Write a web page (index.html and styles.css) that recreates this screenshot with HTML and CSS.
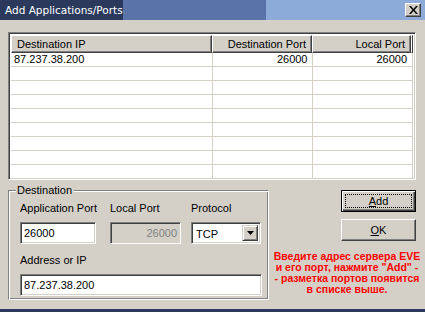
FILE: index.html
```html
<!DOCTYPE html>
<html>
<head>
<meta charset="utf-8">
<link rel="stylesheet" href="styles.css">
</head>
<body>
<div class="window">
  <div class="titlebar">
    <span class="title">Add Applications/Ports</span>
    <div class="close">
      <svg width="9" height="8" viewBox="0 0 9 8"><path d="M0 0h2l2.5 3 2.5-3h2L5.5 4 9 8H7L4.5 5 2 8H0l3.5-4z" fill="#000"/></svg>
    </div>
  </div>
  <div class="client">
    <div class="list">
      <div class="list-head">
        <div class="th c1">Destination IP</div>
        <div class="th c2 r">Destination Port</div>
        <div class="th c3 r">Local Port</div>
        <div class="th fill"></div>
      </div>
      <div class="row"><div class="td c1">87.237.38.200</div><div class="td c2 r">26000</div><div class="td c3 r">26000</div></div>
      <div class="row"><div class="td c1"></div><div class="td c2"></div><div class="td c3"></div></div>
      <div class="row"><div class="td c1"></div><div class="td c2"></div><div class="td c3"></div></div>
      <div class="row"><div class="td c1"></div><div class="td c2"></div><div class="td c3"></div></div>
      <div class="row"><div class="td c1"></div><div class="td c2"></div><div class="td c3"></div></div>
      <div class="row"><div class="td c1"></div><div class="td c2"></div><div class="td c3"></div></div>
      <div class="row"><div class="td c1"></div><div class="td c2"></div><div class="td c3"></div></div>
      <div class="row"><div class="td c1"></div><div class="td c2"></div><div class="td c3"></div></div>
      <div class="row"><div class="td c1"></div><div class="td c2"></div><div class="td c3"></div></div>
    </div>
    <div class="bottom">
      <div class="group">
        <span class="legend">Destination</span>
        <div class="fields">
          <div class="field f-app">
            <span class="label">Application Port</span>
            <div class="edit">26000</div>
          </div>
          <div class="field f-local">
            <span class="label">Local Port</span>
            <div class="edit disabled">26000</div>
          </div>
          <div class="field f-proto">
            <span class="label">Protocol</span>
            <div class="combo">
              <span class="combo-text">TCP</span>
              <span class="combo-btn">
                <svg width="7" height="4" viewBox="0 0 7 4"><path d="M0 0h7L3.5 4z" fill="#000"/></svg>
              </span>
            </div>
          </div>
        </div>
        <div class="field f-addr">
          <span class="label">Address or IP</span>
          <div class="edit">87.237.38.200</div>
        </div>
      </div>
      <div class="side">
        <div class="buttons">
          <div class="btn default"><span class="focus"><u>A</u>dd</span></div>
          <div class="btn"><u>O</u>K</div>
        </div>
        <p class="note">Введите адрес сервера EVE<br>и его порт, нажмите "Add" -<br>- разметка портов появится<br>в списке выше.</p>
      </div>
    </div>
  </div>
</div>
</body>
</html>
```

FILE: styles.css
```css
* { box-sizing: border-box; }
html, body { margin: 0; padding: 0; }
body {
  width: 425px;
  height: 312px;
  overflow: hidden;
  background: #d4d0c8;
  font-family: "Liberation Sans", Arial, sans-serif;
  font-size: 11px;
  color: #000;
}
.window {
  width: 425px;
  height: 312px;
  display: flex;
  flex-direction: column;
  background: #d4d0c8;
  border-bottom: 3px solid #2b3a5c;
}
.titlebar {
  height: 20px;
  display: flex;
  align-items: center;
  background: linear-gradient(to right, #2b3a5c 0, #2b3a5c 123px, #5a73a8 123px, #5a73a8 266px, #8cabd8 266px);
  padding: 0 5px 0 5px;
}
.title {
  color: #fff;
  font-family: "DejaVu Sans", Verdana, sans-serif;
  font-size: 10.5px;
  font-weight: normal;
  flex: 1;
}
.close {
  width: 16px;
  height: 14px;
  background: #d4d0c8;
  border: 1px solid;
  border-color: #fff #404040 #404040 #fff;
  box-shadow: inset -1px -1px 0 #808080;
  display: flex;
  align-items: center;
  justify-content: center;
  margin-right: -1px;
}
.client {
  flex: 1;
  padding: 12px 9px 0 8px;
  display: flex;
  flex-direction: column;
}
.list {
  height: 148px;
  background: #fff;
  border: 1px solid;
  border-color: #808080 #fff #fff #808080;
  box-shadow: inset 1px 1px 0 #404040, inset -1px -1px 0 #d4d0c8;
  padding: 2px;
  overflow: hidden;
}
.list-head {
  display: flex;
  height: 18px;
}
.th {
  background: #d4d0c8;
  border: 1px solid;
  border-color: #fff #404040 #404040 #fff;
  box-shadow: inset -1px -1px 0 #808080;
  padding: 2px 5px 0 5px;
  line-height: 13px;
  white-space: nowrap;
}
.c1 { width: 203px; }
.c2 { width: 101px; }
.c3 { width: 100px; }
.th.fill { flex: 1; padding: 0; }
.r { text-align: right; }
.row {
  display: flex;
  height: 14px;
  border-bottom: 1px solid #d4d0c8;
}
.td {
  border-right: 1px solid #d4d0c8;
  padding: 0 5px 0 3px;
  line-height: 13px;
  white-space: nowrap;
}
.bottom {
  display: flex;
  margin-top: 10px;
}
.group {
  position: relative;
  width: 261px;
  height: 110px;
  flex: none;
  border: 1px solid;
  border-color: #808080 #fff #fff #808080;
  box-shadow: inset 1px 1px 0 #fff, inset -1px -1px 0 #808080;
  padding: 11px 0 0 11px;
}
.legend {
  position: absolute;
  left: 7px;
  top: -7px;
  background: #d4d0c8;
  padding: 0 2px 0 1px;
  line-height: 13px;
}
.fields {
  display: flex;
}
.field {
  display: flex;
  flex-direction: column;
}
.label {
  line-height: 13px;
  height: 13px;
  margin-bottom: 7px;
}
.f-app { width: 90px; }
.f-app .edit { width: 76px; }
.f-local { width: 81px; }
.f-local .edit { width: 71px; }
.f-addr { margin-top: 10px; }
.f-addr .edit { width: 242px; }
.edit {
  height: 22px;
  background: #fff;
  border: 1px solid;
  border-color: #808080 #fff #fff #808080;
  box-shadow: inset 1px 1px 0 #404040, inset -1px -1px 0 #d4d0c8;
  padding: 3px 3px 0 3px;
  line-height: 14px;
}
.edit.disabled {
  background: #d4d0c8;
  color: #808080;
  text-align: right;
}
.combo {
  width: 70px;
  height: 22px;
  background: #fff;
  border: 1px solid;
  border-color: #808080 #fff #fff #808080;
  box-shadow: inset 1px 1px 0 #404040, inset -1px -1px 0 #d4d0c8;
  padding: 2px;
  display: flex;
}
.combo-text {
  flex: 1;
  padding: 2px 0 0 2px;
  line-height: 14px;
}
.combo-btn {
  width: 16px;
  height: 16px;
  background: #d4d0c8;
  border: 1px solid;
  border-color: #d4d0c8 #404040 #404040 #d4d0c8;
  box-shadow: inset 1px 1px 0 #fff, inset -1px -1px 0 #808080;
  display: flex;
  align-items: center;
  justify-content: center;
}
.side {
  flex: 1;
  min-width: 0;
  display: flex;
  flex-direction: column;
  align-items: stretch;
}
.buttons {
  display: flex;
  flex-direction: column;
  align-items: flex-end;
  gap: 7px;
}
.btn {
  width: 75px;
  height: 22px;
  background: #d4d0c8;
  border: 1px solid;
  border-color: #fff #404040 #404040 #fff;
  box-shadow: inset -1px -1px 0 #808080;
  display: flex;
  align-items: center;
  justify-content: center;
  line-height: 13px;
}
.btn.default {
  border: 1px solid #000;
  box-shadow: inset 1px 1px 0 #fff, inset -1px -1px 0 #404040, inset -2px -2px 0 #808080;
  padding: 3px;
}
.focus {
  width: 100%;
  height: 100%;
  border: 1px dotted #000;
  display: flex;
  align-items: center;
  justify-content: center;
}
.note {
  margin: 10px 0 0 3px;
  width: 150px;
  text-align: center;
  color: #ff0000;
  font-family: "Liberation Sans", Arial, sans-serif;
  font-weight: bold;
  font-size: 10.5px;
  line-height: 11px;
  white-space: nowrap;
}
```
